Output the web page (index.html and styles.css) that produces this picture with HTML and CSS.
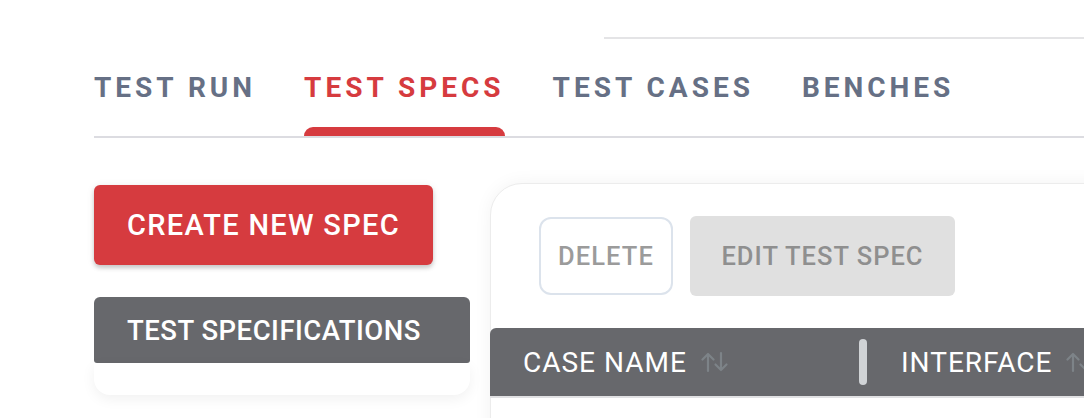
FILE: index.html
```html
<!DOCTYPE html>
<html lang="en">
<head>
<meta charset="utf-8">
<title>Test Specs</title>
<link rel="stylesheet" href="styles.css">
</head>
<body>
<div class="page">
  <header class="topbar"><div class="topbar-line"></div></header>
  <nav class="tabs">
    <div class="tab"><span class="tab-label">TEST RUN</span><span class="tab-ind"></span></div>
    <div class="tab active"><span class="tab-label">TEST SPECS</span><span class="tab-ind"></span></div>
    <div class="tab"><span class="tab-label">TEST CASES</span><span class="tab-ind"></span></div>
    <div class="tab"><span class="tab-label">BENCHES</span><span class="tab-ind"></span></div>
  </nav>
  <main class="content">
    <aside class="side">
      <button class="btn-create">CREATE NEW SPEC</button>
      <div class="spec-list">
        <div class="spec-head">TEST SPECIFICATIONS</div>
        <div class="spec-body"></div>
      </div>
    </aside>
    <section class="card">
      <div class="toolbar">
        <button class="btn-delete">DELETE</button>
        <button class="btn-edit">EDIT TEST SPEC</button>
      </div>
      <div class="thead">
        <div class="th th-name">
          <span>CASE NAME</span>
          <svg class="sort" viewBox="0 0 28 22" width="28" height="22" aria-hidden="true">
            <path d="M7 20V3M1.5 8.5L7 3l5.5 5.5" fill="none" stroke="#7d8388" stroke-width="2.2" stroke-linecap="round" stroke-linejoin="round"/>
            <path d="M20 2v17M14.5 13.5L20 19l5.5-5.5" fill="none" stroke="#7d8388" stroke-width="2.2" stroke-linecap="round" stroke-linejoin="round"/>
          </svg>
        </div>
        <div class="resizer"></div>
        <div class="th th-iface">
          <span>INTERFACE</span>
          <svg class="sort" viewBox="0 0 28 22" width="28" height="22" aria-hidden="true">
            <path d="M7 20V3M1.5 8.5L7 3l5.5 5.5" fill="none" stroke="#7d8388" stroke-width="2.2" stroke-linecap="round" stroke-linejoin="round"/>
            <path d="M20 2v17M14.5 13.5L20 19l5.5-5.5" fill="none" stroke="#7d8388" stroke-width="2.2" stroke-linecap="round" stroke-linejoin="round"/>
          </svg>
        </div>
      </div>
    </section>
  </main>
</div>
</body>
</html>
```
FILE: styles.css
```css
html, body {
  margin: 0;
  padding: 0;
  background: #ffffff;
  overflow: hidden;
}
body {
  font-family: Roboto, "Liberation Sans", Arial, sans-serif;
  width: 1084px;
  height: 418px;
}
.page {
  width: 1084px;
  height: 418px;
  overflow: hidden;
}
.topbar {
  display: flex;
  justify-content: flex-end;
  height: 39px;
}
.topbar-line {
  width: 480px;
  border-bottom: 2px solid #e4e4e6;
}
.tabs {
  display: flex;
  gap: 48px;
  margin-left: 94px;
  border-bottom: 2px solid #dcdce1;
}
.tab {
  display: flex;
  flex-direction: column;
  padding-top: 32px;
}
.tab-label {
  font-size: 28px;
  font-weight: 700;
  letter-spacing: 4px;
  line-height: 33px;
  color: #667085;
  white-space: nowrap;
}
.tab-ind {
  display: block;
  height: 9px;
  margin-top: 23px;
  border-radius: 9px 9px 0 0;
}
.tab.active .tab-label {
  color: #d63b3f;
}
.tab.active .tab-ind {
  background: #d63b3f;
}
.content {
  display: flex;
  gap: 20px;
  padding-left: 94px;
  padding-top: 45px;
}
.side {
  width: 376px;
  flex: none;
  display: flex;
  flex-direction: column;
  align-items: flex-start;
  padding-top: 2px;
}
.btn-create {
  width: 339px;
  height: 80px;
  border: none;
  border-radius: 6px;
  background: #d63b3f;
  color: #ffffff;
  font-family: Roboto, "Liberation Sans", Arial, sans-serif;
  font-size: 29px;
  font-weight: 500;
  letter-spacing: 1.3px;
  box-shadow: 0 3px 4px rgba(0,0,0,0.18), 0 1px 8px rgba(0,0,0,0.08);
  padding: 0;
}
.spec-list {
  width: 376px;
  margin-top: 32px;
  display: flex;
  flex-direction: column;
}
.spec-head {
  height: 66px;
  background: #67686c;
  border-radius: 6px 6px 3px 3px;
  color: #ffffff;
  font-size: 27.5px;
  font-weight: 500;
  letter-spacing: 0.5px;
  display: flex;
  align-items: center;
  padding-left: 33px;
  box-sizing: border-box;
}
.spec-body {
  height: 32px;
  background: #ffffff;
  border-radius: 0 0 16px 16px;
  box-shadow: 0 4px 14px rgba(0,0,0,0.06);
}
.card {
  flex: none;
  width: 700px;
  height: 260px;
  border: 1px solid #ececec;
  border-radius: 32px 0 0 0;
  background: #ffffff;
  box-shadow: 0 0 18px rgba(0,0,0,0.05);
}
.toolbar {
  display: flex;
  align-items: center;
  gap: 17px;
  padding: 32px 0 0 48px;
  height: 80px;
}
.btn-delete {
  width: 134px;
  height: 78px;
  border: 2px solid #dce3ec;
  border-radius: 12px;
  background: #ffffff;
  color: #9b9b9b;
  font-family: Roboto, "Liberation Sans", Arial, sans-serif;
  font-size: 25.5px;
  font-weight: 500;
  letter-spacing: 1.1px;
  padding: 0;
}
.btn-edit {
  width: 265px;
  height: 80px;
  border: none;
  border-radius: 6px;
  background: #e0e0e0;
  color: #8f8f8f;
  font-family: Roboto, "Liberation Sans", Arial, sans-serif;
  font-size: 25.5px;
  font-weight: 500;
  letter-spacing: 1px;
  padding: 0;
}
.thead {
  margin-top: 32px;
  margin-left: -1px;
  height: 68px;
  background: #67686c;
  border-bottom: 2px solid #e1e1e3;
  border-radius: 6px 0 0 0;
  display: flex;
  align-items: center;
}
.th {
  display: flex;
  align-items: center;
  gap: 14px;
  color: #ffffff;
  font-size: 28px;
  font-weight: 400;
  letter-spacing: 1px;
  white-space: nowrap;
}
.th-name {
  width: 369px;
  padding-left: 33px;
  box-sizing: border-box;
}
.th-iface {
  padding-left: 34px;
}
.resizer {
  width: 8px;
  height: 46px;
  border-radius: 4px;
  background: #d0d3d6;
  flex: none;
}
.sort {
  flex: none;
}
```
